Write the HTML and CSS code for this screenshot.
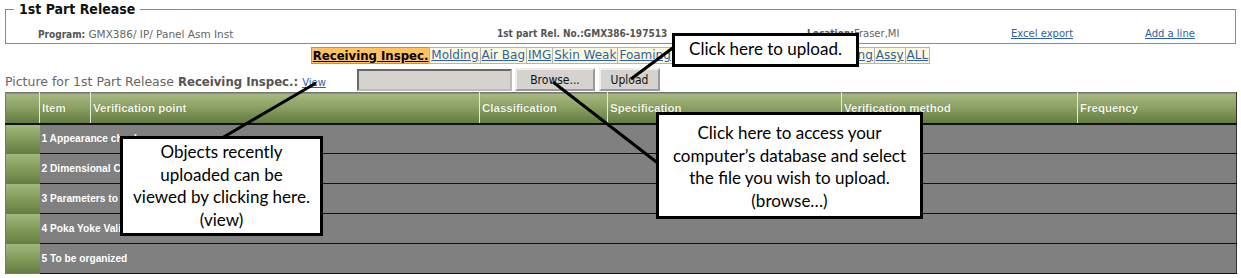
FILE: index.html
```html
<!DOCTYPE html>
<html lang="en">
<head>
  <meta charset="UTF-8" />
  <title>1st Part Release</title>
  <link rel="stylesheet" href="styles.css">
</head>
<body>
  <fieldset class="release">
    <legend>1st Part Release</legend>
    <div class="meta">
      <span class="program"><b>Program:</b> GMX386/ IP/ Panel Asm Inst</span>
      <span><b>1st part Rel. No.:GMX386-197513</b></span>
      <span><b>Location:</b>Fraser,MI</span>
      <a href="#">Excel export</a>
      <a href="#">Add a line</a>
    </div>
  </fieldset>

  <div class="tabs">
    <a href="#" class="tab active">Receiving Inspec.</a>
    <a href="#" class="tab">Molding</a>
    <a href="#" class="tab">Air Bag</a>
    <a href="#" class="tab">IMG</a>
    <a href="#" class="tab">Skin Weak</a>
    <a href="#" class="tab">Foaming</a>
    <a href="#" class="tab">Fabric</a>
    <a href="#" class="tab">Wrapping</a>
    <a href="#" class="tab">Sewing</a>
    <a href="#" class="tab">Handling</a>
    <a href="#" class="tab">Assy</a>
    <a href="#" class="tab">ALL</a>
  </div>

  <div class="upload-row">
    <span class="pic-label">Picture for 1st Part Release <b>Receiving Inspec.:</b> <a href="#" class="view">View</a></span>
    <input type="text" class="file-path">
    <button class="browse">Browse...</button>
    <button class="upload">Upload</button>
  </div>

  <table class="grid">
    <colgroup>
      <col style="width:34px"><col style="width:51px"><col style="width:389px"><col style="width:128px">
      <col style="width:234px"><col style="width:236px"><col>
    </colgroup>
    <thead>
      <tr>
        <th></th>
        <th>Item</th>
        <th>Verification point</th>
        <th>Classification</th>
        <th>Specification</th>
        <th>Verification method</th>
        <th>Frequency</th>
      </tr>
    </thead>
    <tbody>
      <tr><td class="mark"></td><td colspan="6">1 Appearance check</td></tr>
      <tr><td class="mark"></td><td colspan="6">2 Dimensional Check</td></tr>
      <tr><td class="mark"></td><td colspan="6">3 Parameters to check</td></tr>
      <tr><td class="mark"></td><td colspan="6">4 Poka Yoke Validation</td></tr>
      <tr><td class="mark"></td><td colspan="6">5 To be organized</td></tr>
    </tbody>
  </table>

  <!-- callout pointers -->
  <svg class="pointers" width="1241" height="278" viewBox="0 0 1241 278">
    <line x1="631" y1="79" x2="674" y2="47" />
    <line x1="316" y1="83" x2="222" y2="138" />
    <line x1="553" y1="82" x2="659" y2="164" />
  </svg>

  <div class="callout c-upload">Click here to upload.</div>
  <div class="callout c-view">Objects recently<br>uploaded can be<br>viewed by clicking here.<br>(view)</div>
  <div class="callout c-browse">Click here to access your<br>computer’s database and select<br>the file you wish to upload.<br>(browse…)</div>
</body>
</html>
```

FILE: styles.css
```css
* {
  box-sizing: border-box;
}
body {
  margin: 0;
  padding: 0 4px 0 5px;
  font-family: "DejaVu Sans", Verdana, sans-serif;
  color: #555;
  background: #fff;
  width: 1241px;
  height: 278px;
  overflow: hidden;
  position: relative;
}
a {
  color: #2f5fa8;
}
b {
  font-family: "DejaVu Sans Condensed", "DejaVu Sans", sans-serif;
}

/* Header box */
.release {
  margin: 0;
  padding: 0 0 4px 0;
  border: 1px solid #8a8a8a;
  width: 1231px;
  height: 44px;
}
.release legend {
  margin-left: 8px;
  padding: 0 5px;
  font-family: "DejaVu Sans Condensed", sans-serif;
  font-size: 14px;
  font-weight: bold;
  color: #111;
  line-height: 18px;
}
.meta {
  display: grid;
  grid-template-columns: 459px 310px 204px 134px 1fr;
  padding: 10px 0 0 32px;
  font-size: 10px;
  line-height: 12px;
  color: #666;
}
.meta b {
  font-size: 10px;
  color: #555;
}
.meta .program {
  font-size: 10.5px;
}

/* Tabs */
.tabs {
  display: flex;
  justify-content: center;
  margin-top: 3px;
  height: 17px;
}
.tab {
  border: 1px solid #b4b4b4;
  margin-left: -1px;
  padding: 0 1px;
  background: #fff9dc;
  font-size: 12px;
  line-height: 15px;
  color: #2f5fa8;
}
.tab.active {
  background: #ffc25e;
  color: #000;
  font-family: "DejaVu Sans Condensed", sans-serif;
  font-size: 13px;
  font-weight: bold;
  border-color: #999;
}

/* Upload row */
.upload-row {
  display: flex;
  align-items: center;
  margin-top: 4px;
  height: 23px;
}
.pic-label {
  font-size: 12.5px;
  color: #666;
  width: 352px;
  padding-top: 4px;
  white-space: nowrap;
}
.pic-label b {
  font-size: 13px;
  color: #555;
}
.view {
  font-size: 10px;
}
.file-path {
  width: 155px;
  height: 22px;
  background: #d6d3ce;
  border: 2px inset #bbb;
  margin: 0 3px 0 0;
}
.upload-row button {
  height: 23px;
  font-family: "DejaVu Sans Condensed", sans-serif;
  font-size: 12px;
  color: #111;
  background: #d6d3ce;
  border: 2px outset #eee;
  padding: 0;
  margin-right: 4px;
}
.browse {
  width: 80px;
}
.upload {
  width: 61px;
}

/* Verification grid */
.grid {
  margin-top: 1px;
  width: 1232px;
  border-collapse: collapse;
  table-layout: fixed;
  border: 1px solid #777;
  border-right-color: #333;
}
.grid th {
  height: 31px;
  background: linear-gradient(#a7b982, #8ca164 45%, #617a3e);
  border-left: 1px solid #e4ead6;
  border-bottom: 2px solid #111;
  color: #f4f6ea;
  font-family: "Liberation Sans", Arial, sans-serif;
  font-size: 11.5px;
  font-weight: bold;
  text-align: left;
  padding: 0 2px;
  text-shadow: 0 0 1px #4a5a30;
}
.grid th:first-child {
  border-left: none;
}
.grid td {
  height: 30px;
  background: #808080;
  border-bottom: 1px solid #111;
  color: #fff;
  font-family: "Liberation Sans", Arial, sans-serif;
  font-size: 10.2px;
  font-weight: bold;
  padding: 0 2px;
}
.grid td.mark {
  background: linear-gradient(#a3b87c, #7f9757 55%, #657d42);
  border-bottom: none;
}

/* Callouts */
.pointers {
  position: absolute;
  top: 0;
  left: 0;
  pointer-events: none;
}
.pointers line {
  stroke: #000;
  stroke-width: 3;
}
.callout {
  position: absolute;
  background: #fff;
  border: 3px solid #000;
  color: #000;
  font-family: Lato, "Open Sans", sans-serif;
  font-size: 17px;
  line-height: 22.7px;
  text-align: center;
  white-space: nowrap;
}
.c-upload {
  left: 672px;
  top: 33px;
  width: 187px;
  height: 34px;
  padding-top: 2px;
}
.c-view {
  left: 120px;
  top: 136px;
  width: 203px;
  height: 100px;
  padding-top: 2px;
}
.c-browse {
  left: 656px;
  top: 112px;
  width: 267px;
  height: 107px;
  padding-top: 7px;
}
```
